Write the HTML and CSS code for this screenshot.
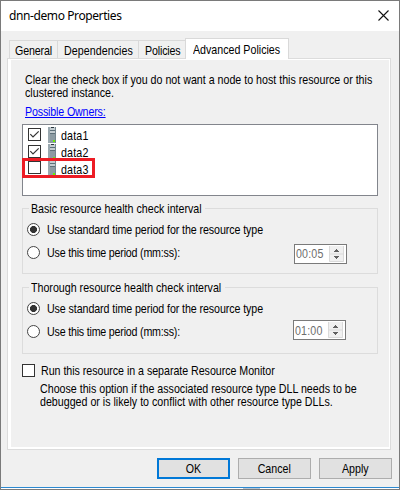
FILE: index.html
```html
<!DOCTYPE html>
<html lang="en">
<head>
<meta charset="utf-8">
<title>dnn-demo Properties</title>
<link rel="stylesheet" href="styles.css">
</head>
<body>
<svg class="defs" width="0" height="0" aria-hidden="true">
  <symbol id="server" viewBox="0 0 8 16">
    <path d="M0 0H8V16H0Z" fill="#8c9ba3"/>
    <path d="M0 0H2V16H0Z" fill="#9aa8af"/>
    <path d="M2 0H7V7H2Z" fill="#c3ccd0"/>
    <path d="M7 0H8V16H7Z" fill="#75868f"/>
    <path d="M3 .5H6" stroke="#28343b"/>
    <path d="M2 3.5H7M2 6.5H7" stroke="#5d6f79"/>
    <path d="M5 13H7V15H5Z" fill="#6cf000"/>
  </symbol>
  <symbol id="tick" viewBox="0 0 11 11">
    <path d="M1.3 5.2L4 8L9.7 2.3" fill="none" stroke="#333" stroke-width="1.2"/>
  </symbol>
  <symbol id="arrows" viewBox="0 0 15 16">
    <path d="M0 0H15V16H0Z" fill="#f0f0f0"/>
    <path d="M.5 0V15.5H14.5V0M0 8H15" fill="none" stroke="#dadada"/>
    <path d="M7 3H8V4H9V5H10V6H5V5H6V4H7ZM5 10H10V11H9V12H8V13H7V12H6V11H5Z" fill="#606060"/>
  </symbol>
</svg>
<main class="window">
  <header class="titlebar">
    <h1 class="title">dnn-demo Properties</h1>
    <svg class="close" width="11" height="11" viewBox="0 0 11 11"><path d="M.5 .5L10.5 10.5M10.5 .5L.5 10.5" stroke="#111" stroke-width="1.1"/></svg>
  </header>
  <nav class="tabs">
    <span class="tab general"><span class="text">General</span></span>
    <span class="tab dependencies"><span class="text">Dependencies</span></span>
    <span class="tab policies"><span class="text">Policies</span></span>
    <span class="tab active"><span class="text">Advanced Policies</span></span>
  </nav>
  <section class="panel">
    <p class="intro text">Clear the check box if you do not want a node to host this resource or this<br>clustered instance.</p>
    <a class="owners text">Possible Owners:</a>
    <ul class="list">
      <li class="row"><span class="check"><svg width="11" height="11"><use href="#tick"/></svg></span><svg class="server" width="8" height="16"><use href="#server"/></svg><span class="name text">data1</span></li>
      <li class="row"><span class="check"><svg width="11" height="11"><use href="#tick"/></svg></span><svg class="server" width="8" height="16"><use href="#server"/></svg><span class="name text">data2</span></li>
      <li class="row marked"><span class="check"></span><svg class="server" width="8" height="16"><use href="#server"/></svg><span class="name text">data3</span></li>
    </ul>
    <fieldset class="group basic">
      <legend><span class="text">Basic resource health check interval</span></legend>
      <label class="option standard"><span class="radio on"></span><span class="text">Use standard time period for the resource type</span></label>
      <div class="custom">
        <label class="option period"><span class="radio"></span><span class="text">Use this time period (mm:ss):</span></label>
        <span class="spinner"><span class="time text">00:05</span><svg width="15" height="16"><use href="#arrows"/></svg></span>
      </div>
    </fieldset>
    <fieldset class="group thorough">
      <legend><span class="text">Thorough resource health check interval</span></legend>
      <label class="option standard"><span class="radio on"></span><span class="text">Use standard time period for the resource type</span></label>
      <div class="custom">
        <label class="option period"><span class="radio"></span><span class="text">Use this time period (mm:ss):</span></label>
        <span class="spinner"><span class="time text">01:00</span><svg width="15" height="16"><use href="#arrows"/></svg></span>
      </div>
    </fieldset>
    <label class="monitor"><span class="check"></span><span class="text">Run this resource in a separate Resource Monitor</span></label>
    <p class="hint text">Choose this option if the associated resource type DLL needs to be<br>debugged or is likely to conflict with other resource type DLLs.</p>
  </section>
  <footer class="buttons">
    <button class="button ok"><span class="text">OK</span></button>
    <button class="button"><span class="text">Cancel</span></button>
    <button class="button"><span class="text">Apply</span></button>
  </footer>
  <div class="edge"><span class="shade"></span></div>
</main>
</body>
</html>
```
FILE: styles.css
```css
* { box-sizing: border-box; }
body {
  margin: 0;
  font: 13px/13px "Liberation Sans", Arial, sans-serif;
  color: #000;
}
h1, p, ul, fieldset { margin: 0; padding: 0; }
ul { list-style: none; }
svg { display: block; flex: none; }
.defs { position: absolute; }

/* condensed interface lettering */
.text { display: block; width: max-content; transform: scaleX(.82); transform-origin: 0 0; }

.window {
  display: flex;
  flex-direction: column;
  width: 400px;
  height: 490px;
  border: 1px solid #7a7a7a;
  background: #f0f0f0;
  white-space: nowrap;
}
.titlebar {
  display: flex;
  align-items: center;
  justify-content: space-between;
  height: 30px;
  padding: 0 10px 0 8px;
  background: #fff;
}
.title { font: 12px/18px "Noto Sans", sans-serif; letter-spacing: -.4px; }
.close { margin-top: -2px; }

.tabs { display: flex; align-items: flex-end; height: 27px; padding-left: 8px; }
.tab {
  flex: none;
  height: 18px;
  padding: 3px 0 0 5px;
  border: 1px solid #d9d9d9;
  border-width: 1px 0 0 1px;
}
.general { width: 48px; letter-spacing: -.16px; }
.dependencies { width: 81px; padding-left: 6px; letter-spacing: .08px; }
.policies { width: 47px; padding-left: 6px; letter-spacing: -.18px; }
.active {
  width: 104px;
  height: 21px;
  margin-bottom: -1px;
  padding: 4px 0 0 7px;
  border-right-width: 1px;
  background: #fff;
  position: relative;
}

.panel {
  width: 384px;
  height: 392px;
  margin-left: 6px;
  padding: 11px 12px 0 11px;
  border: 1px solid #dcdcdc;
  background: #f0f0f0;
  box-shadow: inset 3px 1px #fff, inset -1px -2px #fff;
}
.intro { margin: 3px 0 0 6px; }
.owners {
  margin: 6px 0 0 6px;
  color: #00f;
  letter-spacing: -.18px;
  text-decoration: underline;
  text-underline-offset: 1px;
}
.list {
  width: 356px;
  height: 72px;
  margin: 6px 0 0 3px;
  padding-top: 1px;
  border: 1px solid #82858c;
  background: #fff;
}
.row { display: flex; align-items: center; height: 17px; padding-left: 5px; letter-spacing: .2px; }
.row .check { margin-top: -1px; }
.name { padding-top: 1px; }
.server { margin: 0 5px 0 7px; }
.marked { width: 73px; height: 20px; margin-top: -2px; margin-left: -1px; padding-left: 6px; outline: 3px solid #ed1c24; outline-offset: -3px; }
.marked .server, .marked .check { margin-top: -1px; }
.marked .name { padding-top: 2px; }
.check {
  display: block;
  flex: none;
  width: 13px;
  height: 13px;
  border: 1px solid #333;
  background: #fff;
}
.group {
  width: 356px;
  margin-left: 3px;
  border: 1px solid #dcdcdc;
}
.group legend { width: 176px; height: 13px; margin-left: 6px; padding: 0 0 0 2px; }
.basic { height: 72px; margin-top: 6px; }
.thorough { height: 73px; margin-top: 7px; }
.thorough legend { width: 196px; }
.option { display: flex; align-items: center; height: 13px; gap: 7px; padding-left: 4px; }
.standard { margin-top: 8px; letter-spacing: -.1px; }
.period { letter-spacing: -.24px; }
.radio {
  flex: none;
  width: 13px;
  height: 13px;
  border: 1px solid #444;
  border-radius: 50%;
  background: #fff;
}
.radio.on { background: radial-gradient(circle, #333 3.2px, #fff 3.8px); }
.custom { display: flex; align-items: center; justify-content: space-between; height: 20px; margin-top: 6px; padding-right: 30px; }
.basic .spinner { margin-top: 3px; }
.thorough .custom { padding-right: 31px; }
.thorough .spinner { margin-top: -2px; }
.spinner {
  display: flex;
  align-items: center;
  justify-content: space-between;
  width: 53px;
  height: 20px;
  padding: 0 2px 0 1px;
  border: 1px solid #7a7a7a;
  background: #fff;
  color: #6d6d6d;
  letter-spacing: .2px;
}
.time { width: 32px; }
.monitor { display: flex; align-items: center; height: 13px; margin: 10px 0 0 3px; gap: 6px; letter-spacing: -.04px; }
.hint { margin: 5px 0 0 21px; }

.buttons { display: flex; gap: 8px; margin: 8px 0 0 156px; }
.button {
  width: 73px;
  height: 21px;
  padding: 0;
  border: 1px solid #adadad;
  background: #e1e1e1;
  font: inherit;
}
.button .text { margin: 0 auto; transform-origin: 50% 0; }
.ok { border: 2px solid #0078d7; }
.edge { height: 2px; margin-top: auto; border-top: 1px solid #2b88d0; background: #fff; }
.shade { display: block; width: 17px; height: 1px; margin-left: 242px; background: #b5c4d3; }
```
